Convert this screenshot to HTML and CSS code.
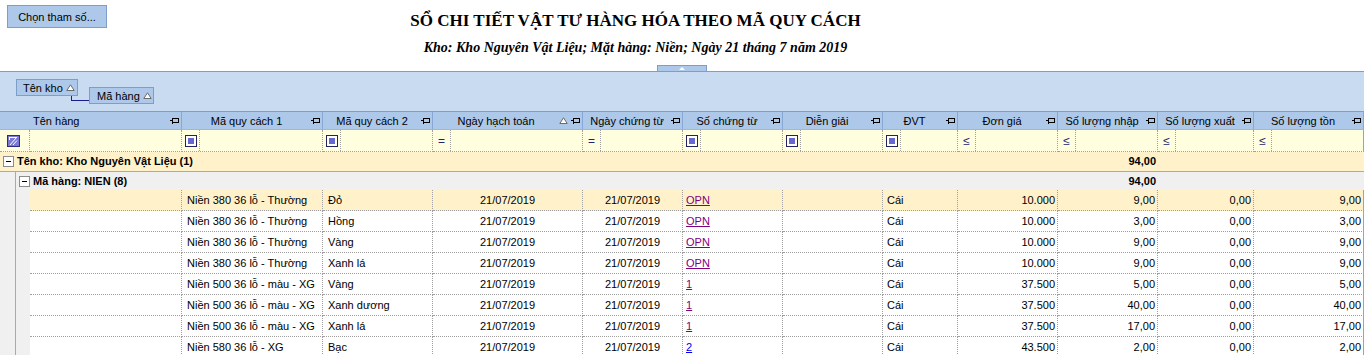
FILE: index.html
```html
<!DOCTYPE html>
<html lang="vi">
<head>
    <meta charset="UTF-8">
    <meta name="viewport" content="width=device-width, initial-scale=1.0">
    <title>Sổ chi tiết vật tư hàng hóa theo mã quy cách</title>
    <link rel="stylesheet" href="styles.css">
</head>
<body>
    <svg class="defs" width="0" height="0">
        <symbol id="pin" viewBox="0 0 9 7">
            <path d="M0 3.5h2.5M2.5 0.5v6M3 1.5h5.5v4H3" fill="none" stroke="#000" shape-rendering="crispEdges"/>
        </symbol>
        <symbol id="sort" viewBox="0 0 9 7">
            <path d="M4.5 0.8L8.2 6.5H0.8Z" fill="#fff" stroke="#6b6b6b"/>
        </symbol>
    </svg>

    <div class="report-head">
        <button class="param-btn">Chọn tham số...</button>
        <div class="report-title">
            <h1>SỔ CHI TIẾT VẬT TƯ HÀNG HÓA THEO MÃ QUY CÁCH</h1>
            <p>Kho: Kho Nguyên Vật Liệu; Mặt hàng: Niền; Ngày 21 tháng 7 năm 2019</p>
        </div>
    </div>
    <div class="collapse-row"><span class="collapse-tab"><i class="tab-arrow"></i></span></div>

    <div class="group-panel">
        <span class="group-chip">Tên kho <svg width="9" height="7"><use href="#sort"/></svg></span>
        <span class="group-chip sub">Mã hàng <svg width="9" height="7"><use href="#sort"/></svg></span>
    </div>

    <table class="grid">
        <colgroup>
            <col style="width:16px"><col style="width:14px"><col style="width:152px">
            <col style="width:141px"><col style="width:110px"><col style="width:150px">
            <col style="width:100px"><col style="width:100px"><col style="width:100px">
            <col style="width:75px"><col style="width:100px"><col style="width:100px">
            <col style="width:96px"><col style="width:110px">
        </colgroup>
        <thead>
            <tr>
                <th colspan="3"><div class="th-in first"><span class="cap">Tên hàng</span><svg width="9" height="7"><use href="#pin"/></svg></div></th>
                <th><div class="th-in"><span class="cap">Mã quy cách 1</span><svg width="9" height="7"><use href="#pin"/></svg></div></th>
                <th><div class="th-in"><span class="cap">Mã quy cách 2</span><svg width="9" height="7"><use href="#pin"/></svg></div></th>
                <th><div class="th-in"><span class="cap">Ngày hạch toán</span><svg class="sort" width="9" height="7"><use href="#sort"/></svg><svg width="9" height="7"><use href="#pin"/></svg></div></th>
                <th><div class="th-in"><span class="cap">Ngày chứng từ</span><svg width="9" height="7"><use href="#pin"/></svg></div></th>
                <th><div class="th-in"><span class="cap">Số chứng từ</span><svg width="9" height="7"><use href="#pin"/></svg></div></th>
                <th><div class="th-in"><span class="cap">Diễn giải</span><svg width="9" height="7"><use href="#pin"/></svg></div></th>
                <th><div class="th-in"><span class="cap">ĐVT</span><svg width="9" height="7"><use href="#pin"/></svg></div></th>
                <th><div class="th-in"><span class="cap">Đơn giá</span><svg width="9" height="7"><use href="#pin"/></svg></div></th>
                <th><div class="th-in"><span class="cap">Số lượng nhập</span><svg width="9" height="7"><use href="#pin"/></svg></div></th>
                <th><div class="th-in"><span class="cap">Số lượng xuất</span><svg width="9" height="7"><use href="#pin"/></svg></div></th>
                <th class="last"><div class="th-in"><span class="cap">Số lượng tồn</span><svg width="9" height="7"><use href="#pin"/></svg></div></th>
            </tr>
        </thead>
        <tbody>
            <tr class="filter-row">
                <td colspan="2"><div class="flt center">
                    <svg width="13" height="12" viewBox="0 0 13 12" shape-rendering="crispEdges">
                        <rect x="0.5" y="0.5" width="12" height="11" fill="#7a7ad4" stroke="#2c2c86"/>
                        <path d="M2 2.5h8M2.5 3v2" stroke="#fff" fill="none"/>
                        <path d="M3 10L9 3M6 10l4-4.5" stroke="#fff" fill="none" shape-rendering="auto"/>
                    </svg>
                </div></td>
                <td><div class="flt"></div></td>
                <td><div class="flt"><span class="cond"><i class="cond-box"></i></span></div></td>
                <td><div class="flt"><span class="cond"><i class="cond-box"></i></span></div></td>
                <td><div class="flt"><span class="cond op">=</span></div></td>
                <td><div class="flt"><span class="cond op">=</span></div></td>
                <td><div class="flt"><span class="cond"><i class="cond-box"></i></span></div></td>
                <td><div class="flt"><span class="cond"><i class="cond-box"></i></span></div></td>
                <td><div class="flt"><span class="cond"><i class="cond-box"></i></span></div></td>
                <td><div class="flt"><span class="cond op">≤</span></div></td>
                <td><div class="flt"><span class="cond op">≤</span></div></td>
                <td><div class="flt"><span class="cond op">≤</span></div></td>
                <td class="last"><div class="flt"><span class="cond op">≤</span></div></td>
            </tr>

            <tr class="group-row lvl1">
                <td colspan="11"><span class="expander"></span>Tên kho: Kho Nguyên Vật Liệu (1)</td>
                <td class="num">94,00</td>
                <td colspan="2"></td>
            </tr>
            <tr class="group-row lvl2">
                <td class="ind0"></td>
                <td colspan="10"><span class="expander"></span>Mã hàng: NIEN (8)</td>
                <td class="num">94,00</td>
                <td colspan="2"></td>
            </tr>

            <tr class="data-row focused">
                <td class="ind0"></td><td class="ind1"></td><td></td>
                <td class="txt">Niền 380 36 lỗ - Thường</td><td class="txt">Đỏ</td>
                <td class="mid">21/07/2019</td><td class="mid">21/07/2019</td>
                <td class="doc"><a href="#">OPN</a></td><td></td><td class="unit">Cái</td>
                <td class="num">10.000</td><td class="num">9,00</td><td class="num">0,00</td><td class="num last">9,00</td>
            </tr>
            <tr class="data-row">
                <td class="ind0"></td><td class="ind1"></td><td></td>
                <td class="txt">Niền 380 36 lỗ - Thường</td><td class="txt">Hồng</td>
                <td class="mid">21/07/2019</td><td class="mid">21/07/2019</td>
                <td class="doc"><a href="#">OPN</a></td><td></td><td class="unit">Cái</td>
                <td class="num">10.000</td><td class="num">3,00</td><td class="num">0,00</td><td class="num last">3,00</td>
            </tr>
            <tr class="data-row">
                <td class="ind0"></td><td class="ind1"></td><td></td>
                <td class="txt">Niền 380 36 lỗ - Thường</td><td class="txt">Vàng</td>
                <td class="mid">21/07/2019</td><td class="mid">21/07/2019</td>
                <td class="doc"><a href="#">OPN</a></td><td></td><td class="unit">Cái</td>
                <td class="num">10.000</td><td class="num">9,00</td><td class="num">0,00</td><td class="num last">9,00</td>
            </tr>
            <tr class="data-row">
                <td class="ind0"></td><td class="ind1"></td><td></td>
                <td class="txt">Niền 380 36 lỗ - Thường</td><td class="txt">Xanh lá</td>
                <td class="mid">21/07/2019</td><td class="mid">21/07/2019</td>
                <td class="doc"><a href="#">OPN</a></td><td></td><td class="unit">Cái</td>
                <td class="num">10.000</td><td class="num">9,00</td><td class="num">0,00</td><td class="num last">9,00</td>
            </tr>
            <tr class="data-row">
                <td class="ind0"></td><td class="ind1"></td><td></td>
                <td class="txt">Niền 500 36 lỗ - màu - XG</td><td class="txt">Vàng</td>
                <td class="mid">21/07/2019</td><td class="mid">21/07/2019</td>
                <td class="doc"><a href="#">1</a></td><td></td><td class="unit">Cái</td>
                <td class="num">37.500</td><td class="num">5,00</td><td class="num">0,00</td><td class="num last">5,00</td>
            </tr>
            <tr class="data-row">
                <td class="ind0"></td><td class="ind1"></td><td></td>
                <td class="txt">Niền 500 36 lỗ - màu - XG</td><td class="txt">Xanh dương</td>
                <td class="mid">21/07/2019</td><td class="mid">21/07/2019</td>
                <td class="doc"><a href="#">1</a></td><td></td><td class="unit">Cái</td>
                <td class="num">37.500</td><td class="num">40,00</td><td class="num">0,00</td><td class="num last">40,00</td>
            </tr>
            <tr class="data-row">
                <td class="ind0"></td><td class="ind1"></td><td></td>
                <td class="txt">Niền 500 36 lỗ - màu - XG</td><td class="txt">Xanh lá</td>
                <td class="mid">21/07/2019</td><td class="mid">21/07/2019</td>
                <td class="doc"><a href="#">1</a></td><td></td><td class="unit">Cái</td>
                <td class="num">37.500</td><td class="num">17,00</td><td class="num">0,00</td><td class="num last">17,00</td>
            </tr>
            <tr class="data-row">
                <td class="ind0"></td><td class="ind1"></td><td></td>
                <td class="txt">Niền 580 36 lỗ - XG</td><td class="txt">Bạc</td>
                <td class="mid">21/07/2019</td><td class="mid">21/07/2019</td>
                <td class="doc"><a href="#" class="new">2</a></td><td></td><td class="unit">Cái</td>
                <td class="num">43.500</td><td class="num">2,00</td><td class="num">0,00</td><td class="num last">2,00</td>
            </tr>
        </tbody>
    </table>
</body>
</html>
```

FILE: styles.css
```css
body {
    margin: 0;
    font-family: "Liberation Sans", Arial, sans-serif;
    font-size: 11px;
    color: #000;
    background-color: #fff;
}

.defs {
    position: absolute;
}

/* report heading */
.report-head {
    display: flex;
    align-items: flex-start;
}

.param-btn {
    margin: 5px 0 0 7px;
    width: 100px;
    height: 23px;
    padding: 0;
    font: inherit;
    color: #000;
    background-color: #aec8e9;
    border: 1px solid #7f9dc9;
}

.report-title {
    flex: 1;
    margin-right: 200px;
    padding-top: 9px;
    text-align: center;
    font-family: "Liberation Serif", "Times New Roman", serif;
}

.report-title h1 {
    margin: 0;
    font-size: 17px;
    line-height: 24px;
}

.report-title p {
    margin: 5px 0 0;
    font-size: 14px;
    line-height: 19px;
    font-weight: bold;
    font-style: italic;
}

.collapse-row {
    display: flex;
    justify-content: center;
    margin-top: 8px;
    height: 6px;
}

.collapse-tab {
    display: flex;
    justify-content: center;
    align-items: center;
    width: 50px;
    height: 6px;
    box-sizing: border-box;
    background-color: #aec8e9;
    border: 1px solid #7f9dc9;
    border-bottom: 0;
}

.tab-arrow {
    width: 0;
    height: 0;
    border-left: 3px solid transparent;
    border-right: 3px solid transparent;
    border-bottom: 3px solid #fff;
}

/* group by panel */
.group-panel {
    display: flex;
    align-items: flex-start;
    height: 40px;
    box-sizing: border-box;
    padding: 7px 0 0 16px;
    background-color: #c9dbf1;
    border-top: 1px solid #7f9dc9;
}

.group-chip {
    display: flex;
    align-items: center;
    justify-content: space-between;
    width: 62px;
    height: 17px;
    box-sizing: border-box;
    padding: 0 2px 0 6px;
    background-color: #aec8e9;
    border: 1px solid #7f9dc9;
}

.group-chip.sub {
    position: relative;
    width: 65px;
    margin: 8px 0 0 11px;
    padding: 0 1px 0 7px;
}

.group-chip.sub::before {
    content: "";
    position: absolute;
    left: -19px;
    top: 8px;
    width: 17px;
    height: 4px;
    border-left: 1px solid #1c1c8a;
    border-bottom: 1px solid #1c1c8a;
}

/* grid */
.grid {
    width: 1364px;
    table-layout: fixed;
    border-collapse: separate;
    border-spacing: 0;
}

.grid th,
.grid td {
    padding: 0;
    white-space: nowrap;
    overflow: hidden;
}

.grid th {
    font-weight: normal;
    background-color: #aec8e9;
    border-top: 1px solid #7f9dc9;
    border-bottom: 1px solid #9ab7de;
    border-right: 1px solid #87a7d6;
}

.th-in {
    display: flex;
    align-items: center;
    height: 17px;
    padding-right: 2px;
}

.th-in .cap {
    flex: 1;
    text-align: center;
}

.th-in.first .cap {
    padding-left: 33px;
    text-align: left;
}

.th-in .sort {
    margin-right: 3px;
}

.filter-row td {
    background-color: #ffffe0;
    border-right: 1px dotted #a0a0a0;
    border-bottom: 1px dotted #a0a0a0;
}

.flt {
    display: flex;
    align-items: center;
    height: 21px;
}

.flt.center {
    justify-content: center;
    padding-right: 2px;
}

.cond {
    display: flex;
    align-items: center;
    justify-content: center;
    width: 17px;
    height: 21px;
    border-right: 1px dotted #a0a0a0;
}

.cond.op {
    font-size: 12px;
    color: #23236e;
}

.cond-box {
    width: 12px;
    height: 12px;
    box-sizing: border-box;
    border: 1px solid #23235f;
    background-color: #fff;
    padding: 2px;
}

.cond-box::after {
    content: "";
    display: block;
    width: 6px;
    height: 6px;
    background-color: #6767d2;
}

.group-row td {
    font-weight: bold;
}

.group-row.lvl1 td {
    line-height: 19px;
    background-color: #fff2cb;
    border-bottom: 1px solid #8eaedb;
}

.group-row.lvl2 td {
    line-height: 18px;
    background-color: #f0f0f0;
}

.expander {
    display: inline-block;
    position: relative;
    width: 11px;
    height: 11px;
    box-sizing: border-box;
    margin: 0 3px 0 3px;
    vertical-align: -2px;
    background-color: #fff;
    border: 1px solid #8c8c8c;
}

.expander::after {
    content: "";
    position: absolute;
    left: 2px;
    top: 4px;
    width: 5px;
    height: 1px;
    background-color: #000;
}

.grid .ind0 {
    background-color: #f0f0f0;
    border-right: 1px solid #8eaedb;
}

.grid .ind1 {
    background-color: #f0f0f0;
}

.data-row td {
    line-height: 20px;
    border-right: 1px dotted #a0a0a0;
    border-bottom: 1px dotted #a0a0a0;
}

.data-row td.ind0 {
    border-right: 1px solid #8eaedb;
    border-bottom: 0;
}

.data-row td.ind1 {
    border-right: 0;
    border-bottom: 0;
}

.data-row.focused td {
    background-color: #fff2cb;
}

.data-row.focused td.ind0,
.data-row.focused td.ind1 {
    background-color: #f0f0f0;
}

.grid .txt {
    padding-left: 5px;
}

.grid .mid {
    text-align: center;
}

.grid .doc {
    padding-left: 3px;
}

.grid .unit {
    padding-left: 4px;
}

.grid .num {
    text-align: right;
    padding-right: 2px;
}

.doc a {
    color: #800080;
}

.doc a.new {
    color: #0000ee;
}

.grid .last {
    border-right: 1px solid #87a7d6;
}
```
